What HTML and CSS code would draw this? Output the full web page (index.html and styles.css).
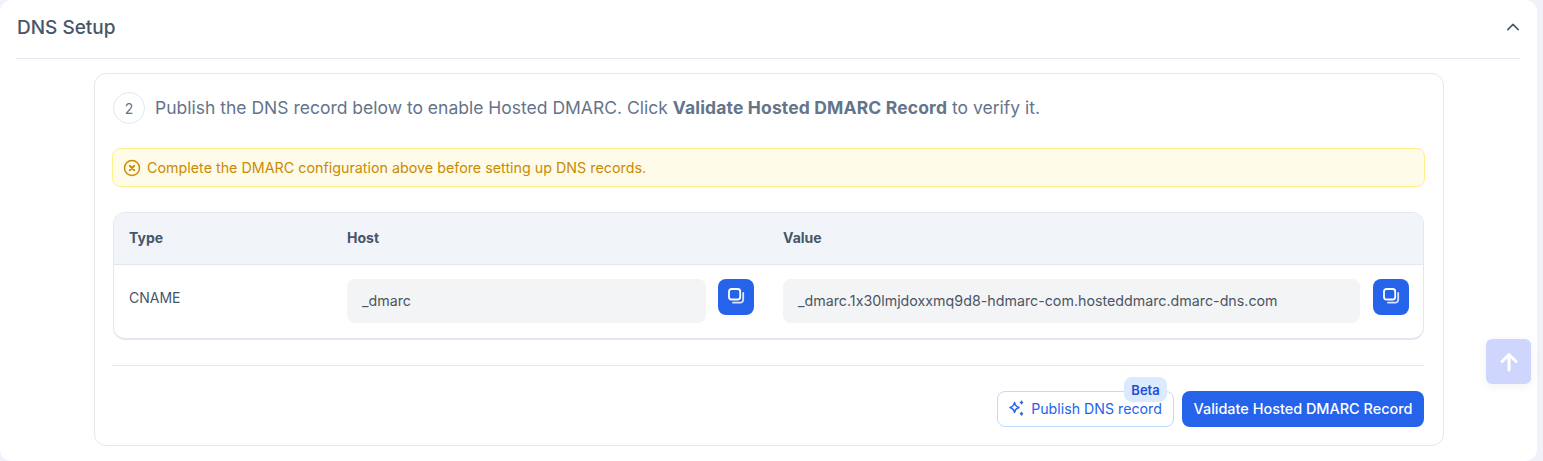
FILE: index.html
```html
<!DOCTYPE html>
<html lang="en">
<head>
<meta charset="utf-8">
<title>DNS Setup</title>
<link rel="stylesheet" href="styles.css">
</head>
<body>
<main class="panel">
  <header class="panel-head">
    <h2 class="panel-title">DNS Setup</h2>
    <svg class="chevron" viewBox="0 0 24 24" width="18" height="18" fill="none" stroke="#475569" stroke-width="2" stroke-linecap="round" stroke-linejoin="round"><path d="M5 15.500l7-7 7 7"/></svg>
  </header>
  <section class="card">
    <div class="step">
      <span class="step-num">2</span>
      <p class="step-text">Publish the DNS record below to enable Hosted DMARC. Click <strong>Validate Hosted DMARC Record</strong> to verify it.</p>
    </div>
    <div class="alert">
      <svg viewBox="0 0 24 24" width="18" height="18" fill="none" stroke="#ca8a04" stroke-width="2" stroke-linecap="round"><circle cx="12" cy="12" r="10"/><path d="M9 9l6 6M15 9l-6 6" stroke-width="2.400"/></svg>
      <span>Complete the DMARC configuration above before setting up DNS records.</span>
    </div>
    <div class="table">
      <div class="row row-head">
        <div class="cell-type">Type</div>
        <div class="cell-host">Host</div>
        <div class="cell-value">Value</div>
      </div>
      <div class="row row-body">
        <div class="cell-type type-name">CNAME</div>
        <div class="cell-host field-wrap">
          <div class="field">_dmarc</div>
          <button class="copy" type="button" aria-label="Copy host"><svg viewBox="0 0 18 18" width="18" height="18" fill="none" stroke="#fff" stroke-width="1.800" stroke-linejoin="round" stroke-linecap="round"><rect x="2" y="1" width="11.200" height="10.500" rx="2.500"/><path d="M16.200 5v6.700a3 3 0 0 1-3 3H6" stroke="#dbe6fd"/></svg></button>
        </div>
        <div class="cell-value field-wrap">
          <div class="field">_dmarc.1x30lmjdoxxmq9d8-hdmarc-com.hosteddmarc.dmarc-dns.com</div>
          <button class="copy" type="button" aria-label="Copy value"><svg viewBox="0 0 18 18" width="18" height="18" fill="none" stroke="#fff" stroke-width="1.800" stroke-linejoin="round" stroke-linecap="round"><rect x="2" y="1" width="11.200" height="10.500" rx="2.500"/><path d="M16.200 5v6.700a3 3 0 0 1-3 3H6" stroke="#dbe6fd"/></svg></button>
        </div>
      </div>
    </div>
    <div class="actions">
      <button class="btn btn-outline" type="button">
        <span class="beta">Beta</span>
        <svg viewBox="0 0 16 16" width="16" height="16" fill="none" stroke="#2563eb" stroke-width="1.500" stroke-linejoin="round" stroke-linecap="round"><path d="M5.500 2.500C6 5.500 7 6.500 10 7.500 7 8.500 6 9.500 5.500 12.500 5 9.500 4 8.500 1 7.500 4 6.500 5 5.500 5.500 2.500z"/><path d="M12.500 1.200v2.600M11.500 2.500h2M12.500 12.400v2.600M11.500 13.700h2"/></svg>
        Publish DNS record
      </button>
      <button class="btn btn-primary" type="button">Validate Hosted DMARC Record</button>
    </div>
  </section>
  <button class="to-top" type="button" aria-label="Back to top"><svg viewBox="0 0 24 24" width="24" height="24" fill="none" stroke="#fff" stroke-width="3" stroke-linecap="round" stroke-linejoin="round"><path d="M12 20V5M5 11.500L12 4.500l7 7"/></svg></button>
</main>
</body>
</html>
```
FILE: styles.css
```css
* { box-sizing: border-box; }
html, body { margin: 0; height: 100%; overflow: hidden; }
body {
  background: #f1f2f9;
  font-family: Inter, "Noto Sans", sans-serif;
  font-feature-settings: "calt" 0;
  color: #475569;
}
.panel {
  position: relative;
  width: 1537px;
  height: 461px;
  background: #fff;
  border-radius: 12px;
  padding: 0 17px 0 16px;
}
.panel-head {
  height: 59px;
  display: flex;
  align-items: center;
  justify-content: space-between;
  padding-bottom: 4px;
  border-bottom: 1px solid #e2e8f0;
}
.panel-title {
  margin: 0 0 0 1px;
  font-size: 19px;
  font-weight: 500;
  color: #475569;
}
.chevron { margin-right: -2px; }
.card {
  width: 1350px;
  height: 373px;
  margin: 14px 0 0 78px;
  border: 1px solid #e5e7eb;
  border-radius: 12px;
  padding: 18px;
  display: flex;
  flex-direction: column;
}
.step { display: flex; align-items: center; gap: 10px; }
.step-num {
  width: 32px;
  height: 32px;
  flex: none;
  border: 1px solid #e2e8f0;
  border-radius: 50%;
  display: flex;
  align-items: center;
  justify-content: center;
  font-size: 14px;
  color: #64748b;
}
.step-text { margin: 0 0 2px; font-size: 17.500px; color: #64748b; }
.step-text strong { font-weight: 700; letter-spacing: 0.150px; color: #64748b; }
.alert {
  margin: 24px 0 0 -1px;
  height: 39px;
  width: 1313px;
  display: flex;
  align-items: center;
  gap: 6px;
  padding-left: 10px;
  background: #fefce8;
  border: 1px solid #fef08a;
  border-radius: 8px;
  font-size: 14.300px;
  color: #ca8a04;
}
.table {
  margin-top: 25px;
  width: 1311px;
  height: 128px;
  border: 1px solid #e2e8f0;
  border-bottom-width: 2px;
  border-radius: 12px;
  overflow: hidden;
}
.row { display: grid; grid-template-columns: 218px 436px 1fr; }
.row-head {
  height: 52px;
  align-items: center;
  background: #f1f5f9;
  border-bottom: 1px solid #e2e8f0;
  padding-bottom: 3px;
  font-size: 14px;
  font-weight: 700;
  color: #475569;
}
.row-body { height: 74px; align-items: center; font-size: 14px; }
.cell-type { padding-left: 15px; }
.cell-host, .cell-value { padding-left: 15px; }
.type-name { color: #475569; margin-top: -10px; }
.field-wrap { display: flex; align-items: flex-start; gap: 12px; margin-top: -2px; }
.cell-host.field-wrap { padding-right: 14px; }
.cell-value.field-wrap { padding-right: 14px; gap: 13px; }
.field {
  flex: 1;
  height: 44px;
  display: flex;
  align-items: center;
  padding: 0 0 2px 15px;
  background: #f3f4f6;
  border-radius: 8px;
  font-size: 14.250px;
  color: #4b5563;
}
.copy {
  width: 36px;
  height: 36px;
  flex: none;
  padding: 0;
  border: 0;
  border-radius: 8px;
  background: #2563eb;
  display: flex;
  align-items: center;
  justify-content: center;
}
.actions {
  margin: 25px 0 0 -1px;
  width: 1312px;
  height: 62px;
  border-top: 1px solid #e2e8f0;
  padding-top: 25px;
  display: flex;
  justify-content: flex-end;
  gap: 8px;
}
.btn {
  height: 36px;
  font-family: inherit;
  font-feature-settings: inherit;
  font-size: 14.200px;
  border-radius: 8px;
  display: flex;
  align-items: center;
  justify-content: center;
  padding: 0 0 2px;
}
.btn-outline {
  position: relative;
  width: 177px;
  gap: 6px;
  background: #fff;
  color: #2563eb;
  border: 1px solid #bfdbfe;
}
.btn-primary {
  width: 242px;
  background: #2563eb;
  color: #fff;
  border: 0;
  font-size: 14.450px;
  font-weight: 500;
}
.beta {
  position: absolute;
  top: -15px;
  right: 6px;
  width: 43px;
  height: 25px;
  background: #dbeafe;
  border-radius: 8px;
  font-size: 13px;
  font-weight: 600;
  color: #1d4ed8;
  display: flex;
  align-items: center;
  justify-content: center;
}
.to-top {
  position: absolute;
  left: 1486px;
  top: 339px;
  width: 45px;
  height: 45px;
  padding: 0;
  border: 0;
  border-radius: 6px;
  background: #cfd6fd;
  box-shadow: 0 2px 8px rgba(100, 116, 139, 0.1);
  display: flex;
  align-items: center;
  justify-content: center;
}
```
